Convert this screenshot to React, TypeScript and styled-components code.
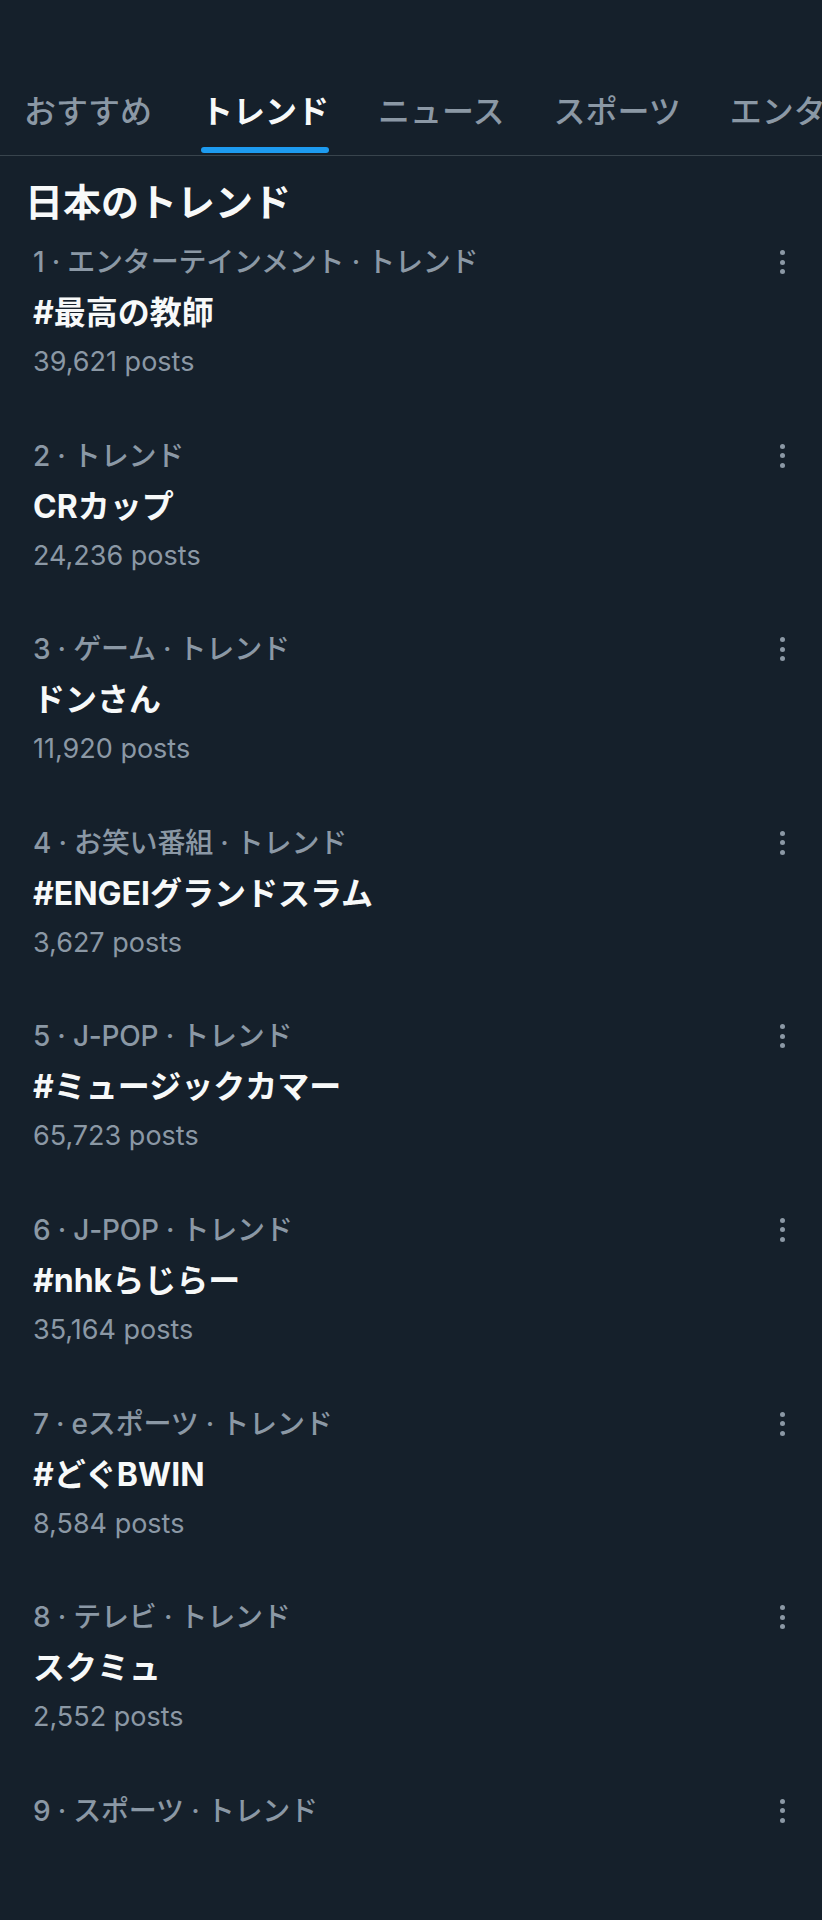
import React from "react";
import styled, { createGlobalStyle } from "styled-components";

const Global = createGlobalStyle`
  html, body {
    margin: 0;
    padding: 0;
    background: #15202b;
  }
  body {
    font-family: "Inter", "Noto Sans CJK JP", sans-serif;
    overflow-x: hidden;
  }
`;

const Page = styled.div`
  width: 822px;
  min-height: 1920px;
  background: #15202b;
  overflow: hidden;
  padding-top: 64px;
  box-sizing: border-box;
`;

const TabBar = styled.nav`
  display: flex;
  gap: 49px;
  padding-left: 24px;
  height: 92px;
  border-bottom: 1px solid #38444d;
  white-space: nowrap;
  box-sizing: border-box;
  overflow: hidden;
`;

const Tab = styled.div`
  display: flex;
  flex-direction: column;
  align-items: stretch;
  padding-top: 25px;
  flex-shrink: 0;
`;

const TabLabel = styled.span<{ $active?: boolean }>`
  font-family: "Noto Sans CJK JP", sans-serif;
  font-size: 32px;
  line-height: 40px;
  font-weight: ${(p) => (p.$active ? 700 : 500)};
  color: ${(p) => (p.$active ? "#f7f9f9" : "#8b98a5")};
`;

const Underline = styled.div<{ $active?: boolean }>`
  margin-top: auto;
  margin-bottom: 2px;
  height: 6px;
  border-radius: 3px;
  background: ${(p) => (p.$active ? "#1d9bf0" : "transparent")};
`;

const Heading = styled.h2`
  margin: 0;
  padding: 22px 0 0 25px;
  font-family: "Noto Sans CJK JP", sans-serif;
  font-size: 38px;
  line-height: 44px;
  font-weight: 700;
  color: #f7f9f9;
`;

const List = styled.div`
  display: flex;
  flex-direction: column;
  padding-top: 20px;
`;

const Item = styled.article`
  display: flex;
  flex-direction: column;
  gap: 10px;
  padding: 0 37px 55.6px 33px;
`;

const MetaRow = styled.div`
  display: flex;
  align-items: center;
  justify-content: space-between;
  height: 40px;
`;

const Meta = styled.span`
  font-size: 28px;
  line-height: 40px;
  font-weight: 500;
  letter-spacing: -0.2px;
  color: #8b98a5;
`;

const Title = styled.div`
  font-size: 32px;
  line-height: 42px;
  font-weight: 700;
  color: #f7f9f9;
`;

const Posts = styled.div`
  font-size: 27px;
  line-height: 36px;
  font-weight: 400;
  color: #8b98a5;
`;

const More = styled.div`
  display: flex;
  flex-direction: column;
  gap: 4.5px;
  padding: 2px 0;
`;

const Dot = styled.span`
  width: 5px;
  height: 5px;
  border-radius: 50%;
  background: #8b98a5;
`;

const tabs = ["おすすめ", "トレンド", "ニュース", "スポーツ", "エンターテイメント"];

type Trend = { meta: string; title?: string; posts?: string };

const trends: Trend[] = [
  { meta: "1 · エンターテインメント · トレンド", title: "#最高の教師", posts: "39,621 posts" },
  { meta: "2 · トレンド", title: "CRカップ", posts: "24,236 posts" },
  { meta: "3 · ゲーム · トレンド", title: "ドンさん", posts: "11,920 posts" },
  { meta: "4 · お笑い番組 · トレンド", title: "#ENGEIグランドスラム", posts: "3,627 posts" },
  { meta: "5 · J-POP · トレンド", title: "#ミュージックカマー", posts: "65,723 posts" },
  { meta: "6 · J-POP · トレンド", title: "#nhkらじらー", posts: "35,164 posts" },
  { meta: "7 · eスポーツ · トレンド", title: "#どぐBWIN", posts: "8,584 posts" },
  { meta: "8 · テレビ · トレンド", title: "スクミュ", posts: "2,552 posts" },
  { meta: "9 · スポーツ · トレンド" },
];

export default function App() {
  return (
    <Page>
      <Global />
      <TabBar>
        {tabs.map((t, i) => (
          <Tab key={t}>
            <TabLabel $active={i === 1}>{t}</TabLabel>
            <Underline $active={i === 1} />
          </Tab>
        ))}
      </TabBar>
      <Heading>日本のトレンド</Heading>
      <List>
        {trends.map((t) => (
          <Item key={t.meta}>
            <MetaRow>
              <Meta>{t.meta}</Meta>
              <More>
                <Dot />
                <Dot />
                <Dot />
              </More>
            </MetaRow>
            {t.title && <Title>{t.title}</Title>}
            {t.posts && <Posts>{t.posts}</Posts>}
          </Item>
        ))}
      </List>
    </Page>
  );
}
